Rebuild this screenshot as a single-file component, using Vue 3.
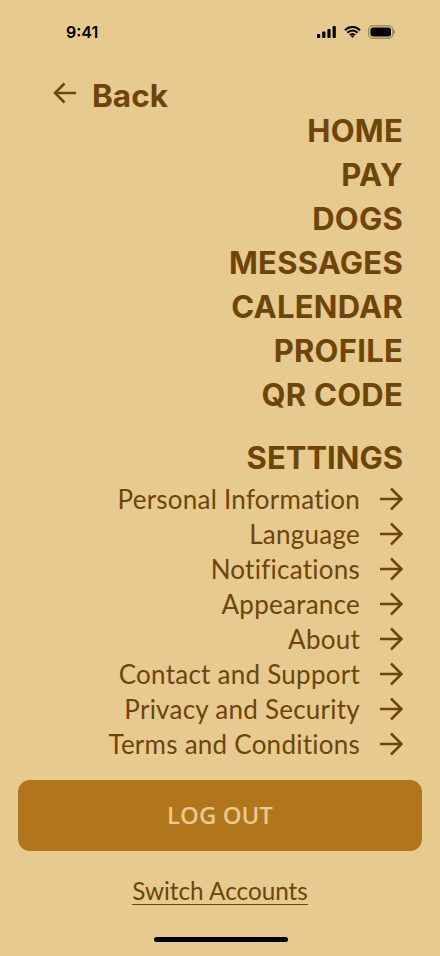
<script setup>
const nav = ['HOME', 'PAY', 'DOGS', 'MESSAGES', 'CALENDAR', 'PROFILE', 'QR CODE']
const settings = ['Personal Information', 'Language', 'Notifications', 'Appearance', 'About', 'Contact and Support', 'Privacy and Security', 'Terms and Conditions']
</script>

<template>
  <div class="screen">
    <div class="status">
      <span class="time">9:41</span>
      <div class="status-icons">
        <svg width="19" height="12" viewBox="0 0 19 12"><rect x="0" y="8" width="3.200" height="4" rx="0.8"/><rect x="5.200" y="5.500" width="3.200" height="6.500" rx="0.8"/><rect x="10.400" y="3" width="3.200" height="9" rx="0.8"/><rect x="15.600" y="0" width="3.200" height="12" rx="0.8"/></svg>
        <svg class="wifi" width="17" height="12" viewBox="0 0 17 12"><path d="M1 4.200a10.500 10.500 0 0 1 15 0M3.400 6.800a7 7 0 0 1 10.200 0M5.900 9.200a3.400 3.400 0 0 1 5.200 0" fill="none" stroke="#000" stroke-width="2"/><path d="M8.500 12l-1.700-2a2.400 2.400 0 0 1 3.400 0z"/></svg>
        <svg width="27" height="14" viewBox="0 0 27 14"><rect x="0.750" y="0.750" width="24" height="12.500" rx="4" fill="none" stroke="#000" stroke-opacity="0.3" stroke-width="1.500"/><rect x="2.500" y="2.500" width="20.500" height="9" rx="2.500"/><path d="M25.500 5v4c.9-.3 1.400-1.100 1.400-2s-.5-1.700-1.400-2z" fill-opacity="0.4"/></svg>
      </div>
    </div>

    <div class="back">
      <svg class="back-arrow" width="26" height="26" viewBox="0 0 26 26"><path d="M24 13H3M12.500 3.500L3 13l9.500 9.500" fill="none" stroke="#6e4507" stroke-width="2.500"/></svg>
      <span>Back</span>
    </div>

    <nav class="nav">
      <a v-for="item in nav" :key="item" class="nav-item">{{ item }}</a>
    </nav>

    <h2 class="settings-title">SETTINGS</h2>
    <ul class="settings">
      <li v-for="item in settings" :key="item" class="row">
        <span>{{ item }}</span>
        <svg width="24" height="24" viewBox="0 0 24 24"><path d="M1 12h21M12 1.500L22.500 12 12 22.500" fill="none" stroke="#6e4507" stroke-width="2.500"/></svg>
      </li>
    </ul>

    <button class="logout">LOG OUT</button>
    <a class="switch">Switch Accounts</a>
    <div class="home-bar"></div>
  </div>
</template>

<style scoped>
.screen {
  width: 440px;
  height: 956px;
  background: #e7ca90;
  color: #6e4507;
  font-family: Lato, "Open Sans", sans-serif;
  display: flex;
  flex-direction: column;
  overflow: hidden;
}
.status {
  height: 64px;
  display: flex;
  justify-content: space-between;
  align-items: center;
  padding: 0 45px 0 66px;
  color: #000;
  box-sizing: border-box;
}
.time {
  font-family: Inter, sans-serif;
  font-size: 16px;
  font-weight: 600;
}
.status-icons {
  display: flex;
  align-items: center;
  gap: 7px;
}
.wifi {
  margin-left: 1px;
}
.back {
  display: flex;
  align-items: center;
  gap: 14px;
  padding-left: 52px;
  height: 36px;
  margin-top: 13px;
  font-family: Inter, sans-serif;
  font-size: 31.500px;
  font-weight: 700;
}
.back-arrow {
  margin-top: -4px;
}
.nav {
  display: flex;
  flex-direction: column;
  align-items: flex-end;
  padding-right: 37px;
  margin-top: -4px;
}
.nav-item {
  height: 44px;
  line-height: 44px;
  font-family: Inter, sans-serif;
  font-size: 31px;
  font-weight: 700;
  letter-spacing: 0.250px;
}
.settings-title {
  margin: 18px 0 0;
  padding-right: 37px;
  text-align: right;
  height: 44px;
  line-height: 46px;
  font-family: Inter, sans-serif;
  font-size: 31px;
  font-weight: 700;
}
.settings {
  list-style: none;
  margin: 2px 0 0;
  padding: 0 37px 0 0;
}
.row {
  height: 35px;
  display: flex;
  justify-content: flex-end;
  align-items: center;
  gap: 19px;
  font-size: 26px;
  font-weight: 400;
  letter-spacing: 0.250px;
  font-variant-ligatures: none;
}
.logout {
  margin: 19px 18px 0;
  padding-bottom: 3px;
  height: 71px;
  border: 0;
  border-radius: 12px;
  background: #b1751b;
  color: #e7ca90;
  font-family: "Open Sans", sans-serif;
  font-size: 24px;
  font-weight: 600;
}
.switch {
  align-self: center;
  margin-top: 24px;
  font-size: 24.300px;
  line-height: 32px;
  text-decoration: underline;
  text-underline-offset: 4px;
  text-decoration-thickness: 1px;
}
.home-bar {
  align-self: center;
  margin-top: 30px;
  width: 134px;
  height: 5px;
  border-radius: 3px;
  background: #000;
  transform: translateX(1px);
}
</style>
